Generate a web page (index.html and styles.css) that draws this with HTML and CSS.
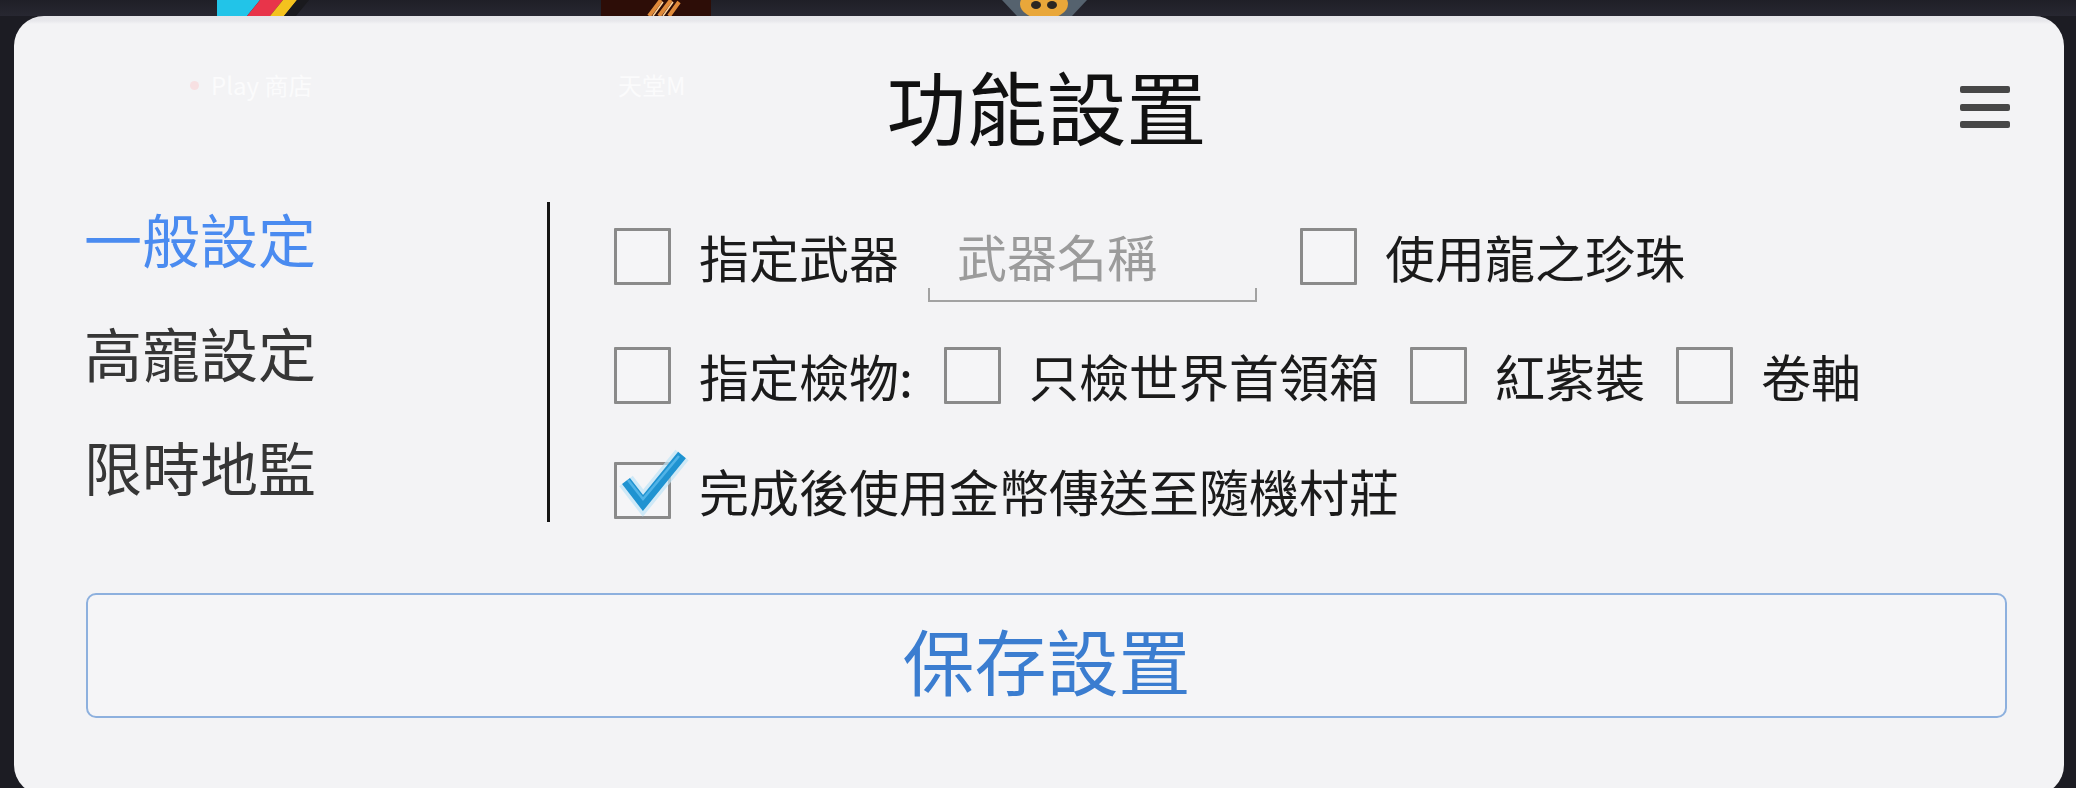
FILE: index.html
```html
<!DOCTYPE html>
<html lang="zh-Hant">
<head>
<meta charset="utf-8">
<title>功能設置</title>
<link rel="stylesheet" href="styles.css">
</head>
<body>
<div class="dock">
  <div class="app app-play">
    <svg width="93" height="16" viewBox="0 0 93 16">
      <polygon points="0,0 43,0 30,16 0,16" fill="#22c4e8"/>
      <polygon points="43,0 66,0 53,16 30,16" fill="#e8344a"/>
      <polygon points="66,0 80,0 67,16 53,16" fill="#f4c21e"/>
      <polygon points="80,0 92,0 79,16 67,16" fill="#1a1a1e"/>
    </svg>
  </div>
  <div class="app app-lineage">
    <svg width="110" height="16" viewBox="0 0 110 16">
      <rect x="0" y="0" width="110" height="16" fill="#2d0d07"/>
      <path d="M48 16 L60 0 M58 16 L70 0 M68 16 L78 2" stroke="#e08a3a" stroke-width="4" fill="none"/>
      <path d="M52 16 L62 2 M62 16 L72 2" stroke="#ffd39a" stroke-width="1.5" fill="none"/>
    </svg>
  </div>
  <div class="app app-third">
    <svg width="85" height="16" viewBox="0 0 85 16">
      <polygon points="0,0 85,0 70,16 15,16" fill="#55626e"/>
      <ellipse cx="42" cy="4" rx="24" ry="15" fill="#e9a73a"/>
      <ellipse cx="34" cy="5" rx="5" ry="4" fill="#2a2622"/>
      <ellipse cx="50" cy="5" rx="5" ry="4" fill="#2a2622"/>
    </svg>
  </div>
</div>

<div class="dialog">
  <div class="ghost ghost-play"><i class="ghost-dot"></i>Play 商店</div>
  <div class="ghost ghost-lineage">天堂M</div>

  <header class="dlg-header">
    <div class="dlg-spacer"></div>
    <h1 class="dlg-title">功能設置</h1>
    <button class="menu-btn" aria-label="menu"><span></span><span></span><span></span></button>
  </header>

  <div class="dlg-body">
    <nav class="side-nav">
      <a class="nav-item active">一般設定</a>
      <a class="nav-item">高寵設定</a>
      <a class="nav-item">限時地監</a>
    </nav>
    <div class="divider"></div>
    <div class="options">
      <div class="opt-row row-1">
        <label class="opt"><span class="cb"></span><span class="opt-text">指定武器</span></label>
        <div class="text-input"><span class="placeholder">武器名稱</span></div>
        <label class="opt opt-far"><span class="cb"></span><span class="opt-text">使用龍之珍珠</span></label>
      </div>
      <div class="opt-row row-2">
        <label class="opt"><span class="cb"></span><span class="opt-text">指定檢物:</span></label>
        <label class="opt"><span class="cb"></span><span class="opt-text">只檢世界首領箱</span></label>
        <label class="opt"><span class="cb"></span><span class="opt-text">紅紫裝</span></label>
        <label class="opt"><span class="cb"></span><span class="opt-text">卷軸</span></label>
      </div>
      <div class="opt-row row-3">
        <label class="opt"><span class="cb checked">
          <svg class="check" width="80" height="72" viewBox="0 0 80 72">
            <polyline points="12,33 29,55 68,7" fill="none" stroke="#bfe4f6" stroke-width="17" stroke-linejoin="miter" opacity="0.7"/>
            <polyline points="12,33 29,55 68,7" fill="none" stroke="#1f93d1" stroke-width="10" stroke-linejoin="miter"/>
            <polyline points="14,32 29,51 65,8" fill="none" stroke="#5cbcec" stroke-width="2.5" opacity="0.8"/>
          </svg>
        </span><span class="opt-text">完成後使用金幣傳送至隨機村莊</span></label>
      </div>
    </div>
  </div>

  <button class="save-btn">保存設置</button>
</div>
</body>
</html>
```

FILE: styles.css
```css
* {
  box-sizing: border-box;
}

html,
body {
  margin: 0;
  padding: 0;
}

body {
  width: 2076px;
  height: 788px;
  overflow: hidden;
  background: #1c1c23;
  font-family: "Noto Sans CJK TC", "Noto Sans CJK SC", "Noto Sans", sans-serif;
}

/* background launcher strip */
.dock {
  height: 16px;
  display: flex;
  align-items: flex-end;
  gap: 291px;
  padding-left: 217px;
  background: linear-gradient(#1f1f27, #272731);
  overflow: hidden;
}

.app {
  height: 16px;
  display: flex;
}

/* dialog */
.dialog {
  position: relative;
  margin-left: 14px;
  width: 2050px;
  height: 779px;
  border-radius: 30px;
  background: linear-gradient(#e5e5e9 0, #e8e8ec 5px, #f3f3f5 8px, #f3f3f5 100%);
  padding: 0 57px 0 72px;
}

.ghost {
  position: absolute;
  top: 56px;
  font-size: 24px;
  line-height: 26px;
  color: #fbfbfc;
  display: flex;
  align-items: center;
  gap: 12px;
}

.ghost-play {
  left: 176px;
}

.ghost-dot {
  width: 9px;
  height: 9px;
  border-radius: 50%;
  background: #f7e0e2;
}

.ghost-lineage {
  left: 604px;
}

.dlg-header {
  height: 170px;
  padding-top: 6px;
  display: grid;
  grid-template-columns: 1fr auto 1fr;
  align-items: center;
}

.dlg-title {
  margin: 0;
  font-size: 80px;
  line-height: 1;
  font-weight: 400;
  color: #111;
}

.menu-btn {
  justify-self: end;
  margin-right: -3px;
  margin-top: 6px;
  width: 50px;
  height: 42px;
  padding: 0;
  border: 0;
  background: transparent;
  display: flex;
  flex-direction: column;
  justify-content: space-between;
}

.menu-btn span {
  display: block;
  width: 50px;
  height: 7px;
  border-radius: 2px;
  background: #474747;
}

.dlg-body {
  height: 407px;
  display: flex;
}

.side-nav {
  width: 461px;
  display: flex;
  flex-direction: column;
  margin-top: -5px;
  margin-left: -2px;
}

.nav-item {
  height: 114px;
  line-height: 114px;
  font-size: 58px;
  color: #363636;
}

.nav-item.active {
  color: #4a8bf0;
}

.divider {
  width: 3px;
  height: 320px;
  margin-top: 16px;
  margin-left: 2px;
  background: #141414;
}

.options {
  flex: 1;
  padding-left: 64px;
  padding-top: 30px;
  display: flex;
  flex-direction: column;
}

.opt-row {
  height: 80px;
  display: flex;
  align-items: center;
  gap: 31px;
}

.row-2 {
  margin-top: 39px;
}

.row-3 {
  margin-top: 35px;
}

.opt {
  display: flex;
  align-items: center;
}

.cb {
  position: relative;
  width: 57px;
  height: 57px;
  border: 3px solid #8a8a8a;
  border-radius: 1px;
  background: #f5f5f7;
  flex: none;
}

.check {
  position: absolute;
  left: -3px;
  top: -17px;
}

.opt-text {
  margin-left: 28px;
  font-size: 50px;
  line-height: 60px;
  color: #1b1b1b;
  white-space: nowrap;
}

.row-1 .text-input {
  margin-left: -2px;
}

.text-input {
  width: 329px;
  height: 92px;
  display: flex;
  align-items: center;
  padding-left: 29px;
  border-bottom: 2px solid #a2a2a2;
  background:
    linear-gradient(#a2a2a2, #a2a2a2) left bottom / 2px 12px no-repeat,
    linear-gradient(#a2a2a2, #a2a2a2) right bottom / 2px 12px no-repeat;
}

.placeholder {
  font-size: 50px;
  line-height: 60px;
  color: #9b9b9b;
}

.opt-far {
  margin-left: 12px;
}

.save-btn {
  display: block;
  width: 100%;
  height: 125px;
  padding: 6px 0 0;
  border: 2px solid #8db0de;
  border-radius: 10px;
  background: #f5f5f7;
  font-family: inherit;
  font-size: 72px;
  line-height: 1;
  color: #3b7dd0;
}
```
